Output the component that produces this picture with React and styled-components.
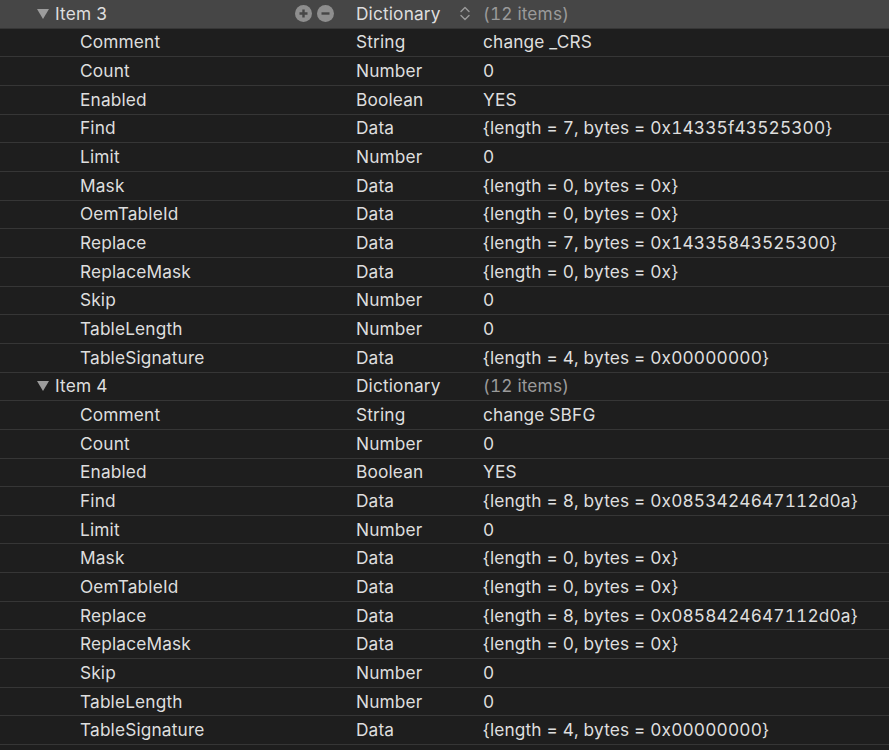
import styled, { createGlobalStyle } from "styled-components";

const GlobalStyle = createGlobalStyle`
  html, body {
    margin: 0;
    padding: 0;
    background: #1e1e1e;
  }
  body {
    font-family: Inter, "Noto Sans", "Liberation Sans", sans-serif;
    -webkit-font-smoothing: antialiased;
  }
`;

const Outline = styled.div`
  width: 889px;
  height: 750px;
  overflow: hidden;
  background: #1e1e1e;
`;

const Row = styled.div`
  display: grid;
  grid-template-columns: 356px 127px 1fr;
  align-items: center;
  box-sizing: border-box;
  height: 28.67px;
  border-bottom: 1px solid #363636;
  background: ${({ selected }) => (selected ? "#464646" : "#1e1e1e")};
  color: #dedede;
  font-size: 17.3px;
  letter-spacing: 0.15px;
  white-space: nowrap;
  padding-bottom: 1px;
`;

const KeyCell = styled.div`
  display: flex;
  align-items: center;
  padding-left: ${({ depth }) => (depth ? "80px" : "37px")};
  padding-right: 22px;
`;

const KeyText = styled.span`
  flex: 1;
`;

const Disclosure = styled.span`
  width: 0;
  height: 0;
  border-left: 6px solid transparent;
  border-right: 6px solid transparent;
  border-top: 10px solid #9c9c9c;
  margin-right: 6px;
  margin-top: 1px;
`;

const Buttons = styled.div`
  display: flex;
  gap: 5px;
`;

const RoundButton = styled.span`
  display: flex;
  align-items: center;
  justify-content: center;
  width: 17px;
  height: 17px;
  border-radius: 50%;
  background: #8e8e8e;
`;

const TypeCell = styled.div`
  display: flex;
  align-items: center;
  justify-content: space-between;
  padding-right: 11px;
`;

const ValueCell = styled.div`
  color: ${({ muted }) => (muted ? "#9a9a9a" : "#dedede")};
  font-variant-numeric: tabular-nums;
`;

const PlusIcon = () => (
  <svg width="11" height="11" viewBox="0 0 11 11">
    <path d="M5.5 1.5v8M1.5 5.5h8" stroke="#464646" strokeWidth="2.4" />
  </svg>
);

const MinusIcon = () => (
  <svg width="11" height="11" viewBox="0 0 11 11">
    <path d="M1.5 5.5h8" stroke="#464646" strokeWidth="2.4" />
  </svg>
);

const UpDown = () => (
  <svg width="14" height="17" viewBox="0 0 14 17">
    <path
      d="M3 6.5l4-4 4 4M3 10.5l4 4 4-4"
      fill="none"
      stroke="#9a9a9a"
      strokeWidth="1.4"
      strokeLinecap="round"
      strokeLinejoin="round"
    />
  </svg>
);

const item = (find, replace, comment) => [
  ["Comment", "String", comment],
  ["Count", "Number", "0"],
  ["Enabled", "Boolean", "YES"],
  ["Find", "Data", find],
  ["Limit", "Number", "0"],
  ["Mask", "Data", "{length = 0, bytes = 0x}"],
  ["OemTableId", "Data", "{length = 0, bytes = 0x}"],
  ["Replace", "Data", replace],
  ["ReplaceMask", "Data", "{length = 0, bytes = 0x}"],
  ["Skip", "Number", "0"],
  ["TableLength", "Number", "0"],
  ["TableSignature", "Data", "{length = 4, bytes = 0x00000000}"],
];

const items = [
  {
    name: "Item 3",
    selected: true,
    children: item(
      "{length = 7, bytes = 0x14335f43525300}",
      "{length = 7, bytes = 0x14335843525300}",
      "change _CRS"
    ),
  },
  {
    name: "Item 4",
    selected: false,
    children: item(
      "{length = 8, bytes = 0x0853424647112d0a}",
      "{length = 8, bytes = 0x0858424647112d0a}",
      "change SBFG"
    ),
  },
];

export default function App() {
  return (
    <>
      <GlobalStyle />
      <Outline>
        {items.map((it) => (
          <div key={it.name}>
            <Row selected={it.selected}>
              <KeyCell>
                <Disclosure />
                <KeyText>{it.name}</KeyText>
                {it.selected && (
                  <Buttons>
                    <RoundButton>
                      <PlusIcon />
                    </RoundButton>
                    <RoundButton>
                      <MinusIcon />
                    </RoundButton>
                  </Buttons>
                )}
              </KeyCell>
              <TypeCell>
                <span>Dictionary</span>
                {it.selected && <UpDown />}
              </TypeCell>
              <ValueCell muted>(12 items)</ValueCell>
            </Row>
            {it.children.map(([k, t, v]) => (
              <Row key={k}>
                <KeyCell depth={1}>
                  <KeyText>{k}</KeyText>
                </KeyCell>
                <TypeCell>
                  <span>{t}</span>
                </TypeCell>
                <ValueCell>{v}</ValueCell>
              </Row>
            ))}
          </div>
        ))}
      </Outline>
    </>
  );
}
